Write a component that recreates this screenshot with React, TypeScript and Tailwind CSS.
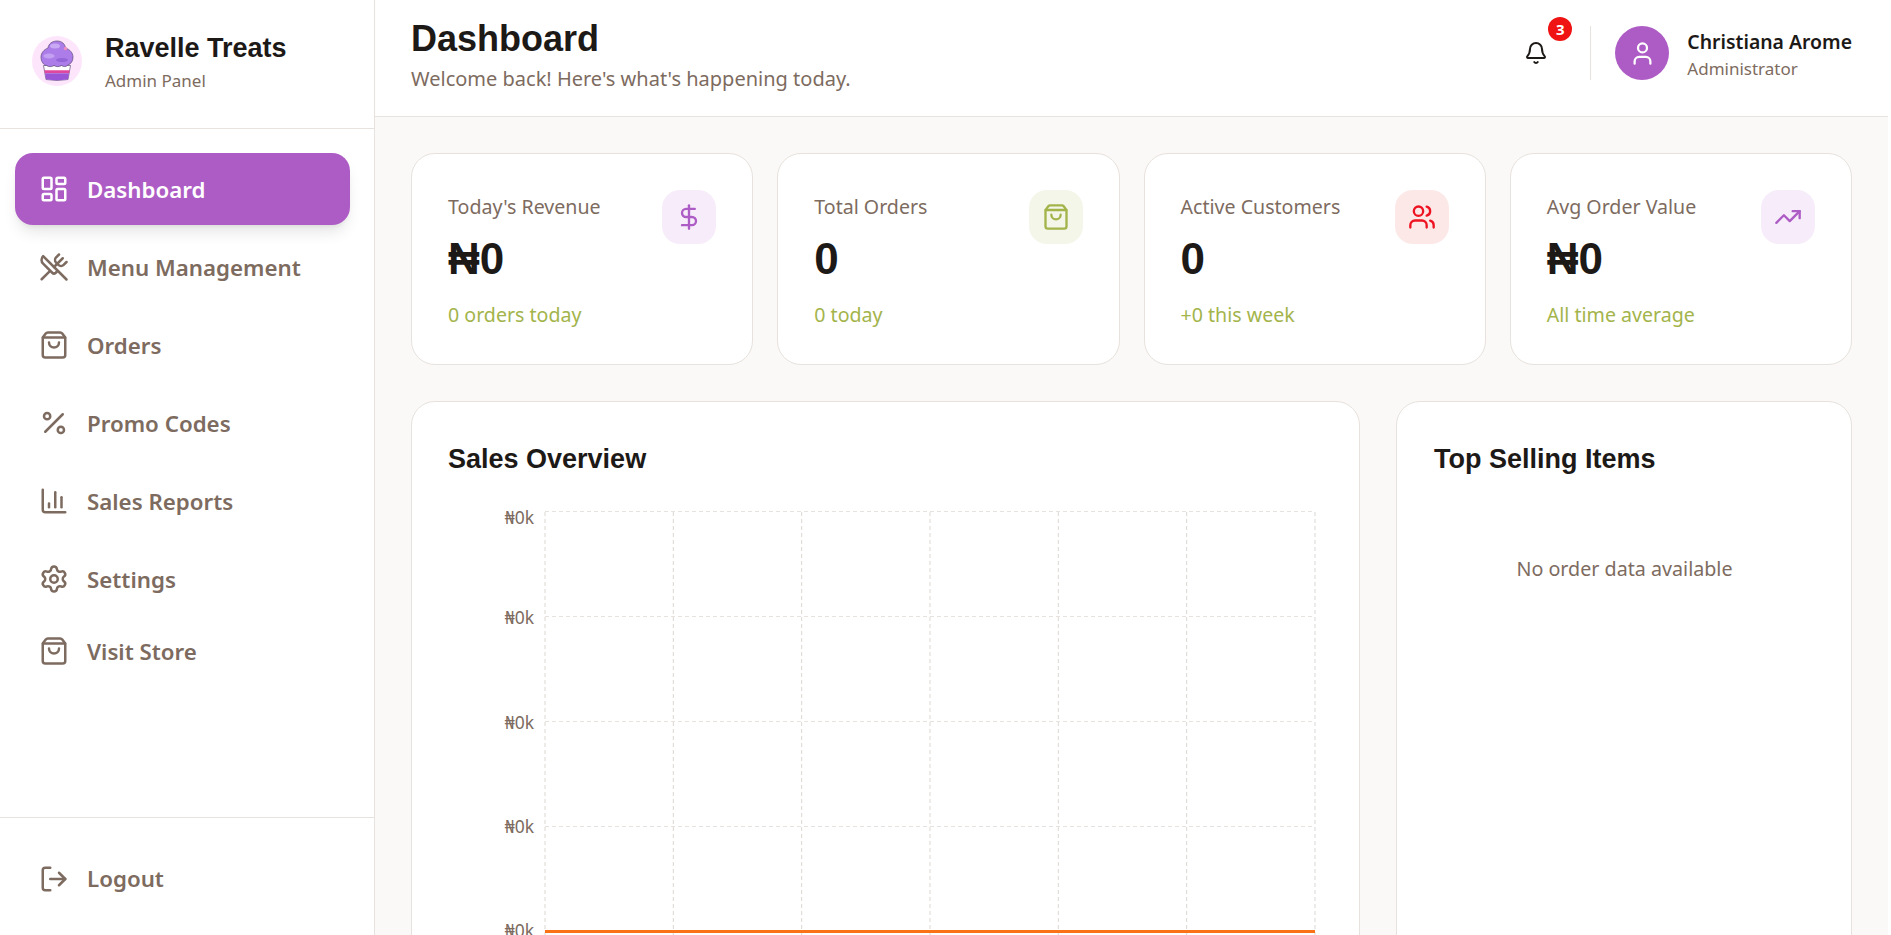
import {
  Bell,
  ChartColumn,
  DollarSign,
  LayoutDashboard,
  LogOut,
  Percent,
  Settings,
  ShoppingBag,
  TrendingUp,
  User,
  Users,
  UtensilsCrossed,
} from "lucide-react";

const navItems = [
  { label: "Menu Management", icon: UtensilsCrossed },
  { label: "Orders", icon: ShoppingBag },
  { label: "Promo Codes", icon: Percent },
  { label: "Sales Reports", icon: ChartColumn },
  { label: "Settings", icon: Settings },
];

const stats = [
  { label: "Today's Revenue", value: "₦0", note: "0 orders today", icon: DollarSign, box: "bg-[#f7ecfa]", color: "text-[#ae5cc5]" },
  { label: "Total Orders", value: "0", note: "0 today", icon: ShoppingBag, box: "bg-[#f4f6e9]", color: "text-[#a3b44b]" },
  { label: "Active Customers", value: "0", note: "+0 this week", icon: Users, box: "bg-[#fde8e8]", color: "text-[#ee1320]" },
  { label: "Avg Order Value", value: "₦0", note: "All time average", icon: TrendingUp, box: "bg-[#f7ecfa]", color: "text-[#ae5cc5]" },
];

function CupcakeLogo() {
  return (
    <svg viewBox="0 0 50 50" className="w-[50px] h-[50px] shrink-0">
      <circle cx="25" cy="25" r="25" fill="#fde6fb" />
      <path d="M11.500 29.500h27L36 43.500q-11 2-22 0z" fill="#fff" stroke="#5f4a7a" strokeWidth="0.7" />
      <path d="M12.300 34.200h25.400l-.6 3H12.900z" fill="#e0479e" />
      <path d="M13 37.200h24l-1.100 6.100q-10.900 2-21.800 0z" fill="#9a55d6" />
      <path
        d="M25 5C30 5 33 8 33.500 12C38 13.500 41 17 41 21C41 25 39 28 36 29C34 31 31.500 31 29.500 29.500C27.500 31 24 31 22 29.500C20 31 16.500 31 14.500 29.500C11.500 29 9 25.500 9 21C9 17 12 13.500 16 12C16.500 8 20 5 25 5Z"
        fill="#ac7de8"
        stroke="#5f4a7a"
        strokeWidth="0.7"
      />
      <ellipse cx="23" cy="10" rx="5" ry="2.500" fill="#c9a8f4" />
      <ellipse cx="17" cy="20" rx="5.500" ry="2.500" fill="#c4a0f2" />
      <ellipse cx="30" cy="24" rx="6" ry="2" fill="#9465d8" />
      <circle cx="33.500" cy="12.500" r="1.700" fill="#ee8fc0" />
    </svg>
  );
}

function SalesChart() {
  const xs = [0, 1, 2, 3, 4, 5, 6].map((i) => 545 + i * 128.33);
  const ys = [511.5, 616.5, 721.5, 826.5];
  const labelYs = [519, 619, 724, 828, 932];
  return (
    <svg width="949" height="640" viewBox="412 402 949 640" className="block">
      {ys.map((y) => (
        <line key={y} x1="545" x2="1315" y1={y} y2={y} stroke="#e7e2dd" strokeDasharray="4 3" strokeWidth="1" />
      ))}
      {xs.map((x) => (
        <line key={x} x1={x} x2={x} y1="512" y2="1036" stroke="#dcd7d2" strokeDasharray="4 3" strokeWidth="1" />
      ))}
      {labelYs.map((y, i) => (
        <text key={i} x="534" y={y + 5} textAnchor="end" fontSize="17.5" fill="#7d6b60" fontFamily="'Noto Sans', sans-serif">
          ₦0k
        </text>
      ))}
      <line x1="545" x2="1315" y1="931.500" y2="931.500" stroke="#f97316" strokeWidth="3" />
    </svg>
  );
}

export default function App() {
  return (
    <div className="h-screen overflow-hidden flex bg-[#fbf9f7] text-[#1c1917] font-['Noto_Sans',sans-serif]">
      <aside className="w-[375px] shrink-0 h-full flex flex-col bg-white border-r border-[#e7e2dd]">
        <div className="h-[129px] shrink-0 flex items-center gap-[23px] pl-8 pb-[6px] border-b border-[#e7e2dd]">
          <CupcakeLogo />
          <div>
            <div className="font-['Liberation_Sans',sans-serif] font-bold text-[27px] leading-[36px]">Ravelle Treats</div>
            <div className="text-[17px] leading-[24px] mt-[3px] text-[#7d6b60]">Admin Panel</div>
          </div>
        </div>
        <nav className="flex-1 pl-[15px] pr-6 pt-6 flex flex-col">
          <a className="h-[72px] shrink-0 flex items-center gap-[18px] px-6 rounded-[18px] bg-[#ae5cc5] text-white text-[22.3px] font-semibold shadow-lg mb-[6px]">
            <LayoutDashboard size={30} strokeWidth={2} />
            <span className="pt-[2px]">Dashboard</span>
          </a>
          {navItems.map((item) => (
            <a key={item.label} className="h-[72px] shrink-0 flex items-center gap-[18px] px-6 rounded-[18px] text-[#7d6b60] text-[22.3px] font-semibold mb-[6px]">
              <item.icon size={30} strokeWidth={2} />
              <span className="pt-[2px]">{item.label}</span>
            </a>
          ))}
          <a className="h-[72px] shrink-0 -mt-[6px] flex items-center gap-[18px] px-6 text-[#7d6b60] text-[22.3px] font-semibold">
            <ShoppingBag size={30} strokeWidth={2} />
            <span className="pt-[2px]">Visit Store</span>
          </a>
        </nav>
        <div className="shrink-0 h-[118px] pt-[25px] pl-[15px] pr-6 border-t border-[#e7e2dd]">
          <a className="h-[72px] flex items-center gap-[18px] px-6 text-[#7d6b60] text-[22.3px] font-semibold">
            <LogOut size={30} strokeWidth={2} />
            <span>Logout</span>
          </a>
        </div>
      </aside>

      <div className="flex-1 min-w-0 flex flex-col pr-[3px] bg-white">
        <header className="h-[117px] shrink-0 flex items-center justify-between px-9 pb-[10px] bg-white border-b border-[#e7e2dd]">
          <div className="pt-[3px]">
            <h1 className="font-['Liberation_Sans',sans-serif] font-bold text-[36px] leading-[44px]">Dashboard</h1>
            <p className="text-[20px] leading-[28px] mt-[4px] text-[#7d6b60]">Welcome back! Here's what's happening today.</p>
          </div>
          <div className="flex items-center">
            <div className="relative w-[24px] h-[24px]">
              <Bell size={24} strokeWidth={2} />
              <span className="absolute -top-[24px] left-[24px] w-6 h-6 rounded-full bg-[#ef1313] text-white text-[15px] font-bold flex items-center justify-center">3</span>
            </div>
            <div className="w-px h-[54px] bg-[#e7e2dd] ml-[42px] mr-6" />
            <div className="w-[54px] h-[54px] rounded-full bg-[#ae5cc5] text-white flex items-center justify-center">
              <User size={27} strokeWidth={2} />
            </div>
            <div className="ml-[18px] pt-[4px]">
              <div className="text-[19.4px] leading-[26px] font-semibold">Christiana Arome</div>
              <div className="text-[17px] leading-[24px] mt-[2px] text-[#7d6b60]">Administrator</div>
            </div>
          </div>
        </header>

        <main className="flex-1 overflow-hidden bg-[#fbf9f7] p-9">
          <div className="grid grid-cols-4 gap-6">
            {stats.map((s) => (
              <div key={s.label} className="h-[212px] bg-white border border-[#e7e2dd] rounded-[24px] p-9 flex justify-between">
                <div>
                  <div className="text-[19.6px] leading-[28px] mt-[3px] text-[#7d6b60]">{s.label}</div>
                  <div className="font-['Liberation_Sans',sans-serif] font-bold text-[44px] leading-[52px] mt-[12px]">{s.value}</div>
                  <div className="text-[19.6px] leading-[28px] mt-[16px] text-[#a3b44b]">{s.note}</div>
                </div>
                <div className={`w-[54px] h-[54px] rounded-[18px] flex items-center justify-center ${s.box} ${s.color}`}>
                  <s.icon size={28} strokeWidth={2} />
                </div>
              </div>
            ))}
          </div>
          <div className="grid grid-cols-[949px_1fr] gap-9 mt-9">
            <section className="h-[640px] bg-white border border-[#e7e2dd] rounded-[24px] relative overflow-hidden">
              <h2 className="absolute left-[36px] top-[39px] font-['Liberation_Sans',sans-serif] font-bold text-[27px] leading-[36px]">Sales Overview</h2>
              <SalesChart />
            </section>
            <section className="h-[640px] bg-white border border-[#e7e2dd] rounded-[24px] pl-[37px] pr-9 pt-[39px]">
              <h2 className="font-['Liberation_Sans',sans-serif] font-bold text-[27px] leading-[36px]">Top Selling Items</h2>
              <p className="mt-[78px] text-center text-[19.7px] leading-[28px] text-[#7d6b60]">No order data available</p>
            </section>
          </div>
        </main>
      </div>
    </div>
  );
}
